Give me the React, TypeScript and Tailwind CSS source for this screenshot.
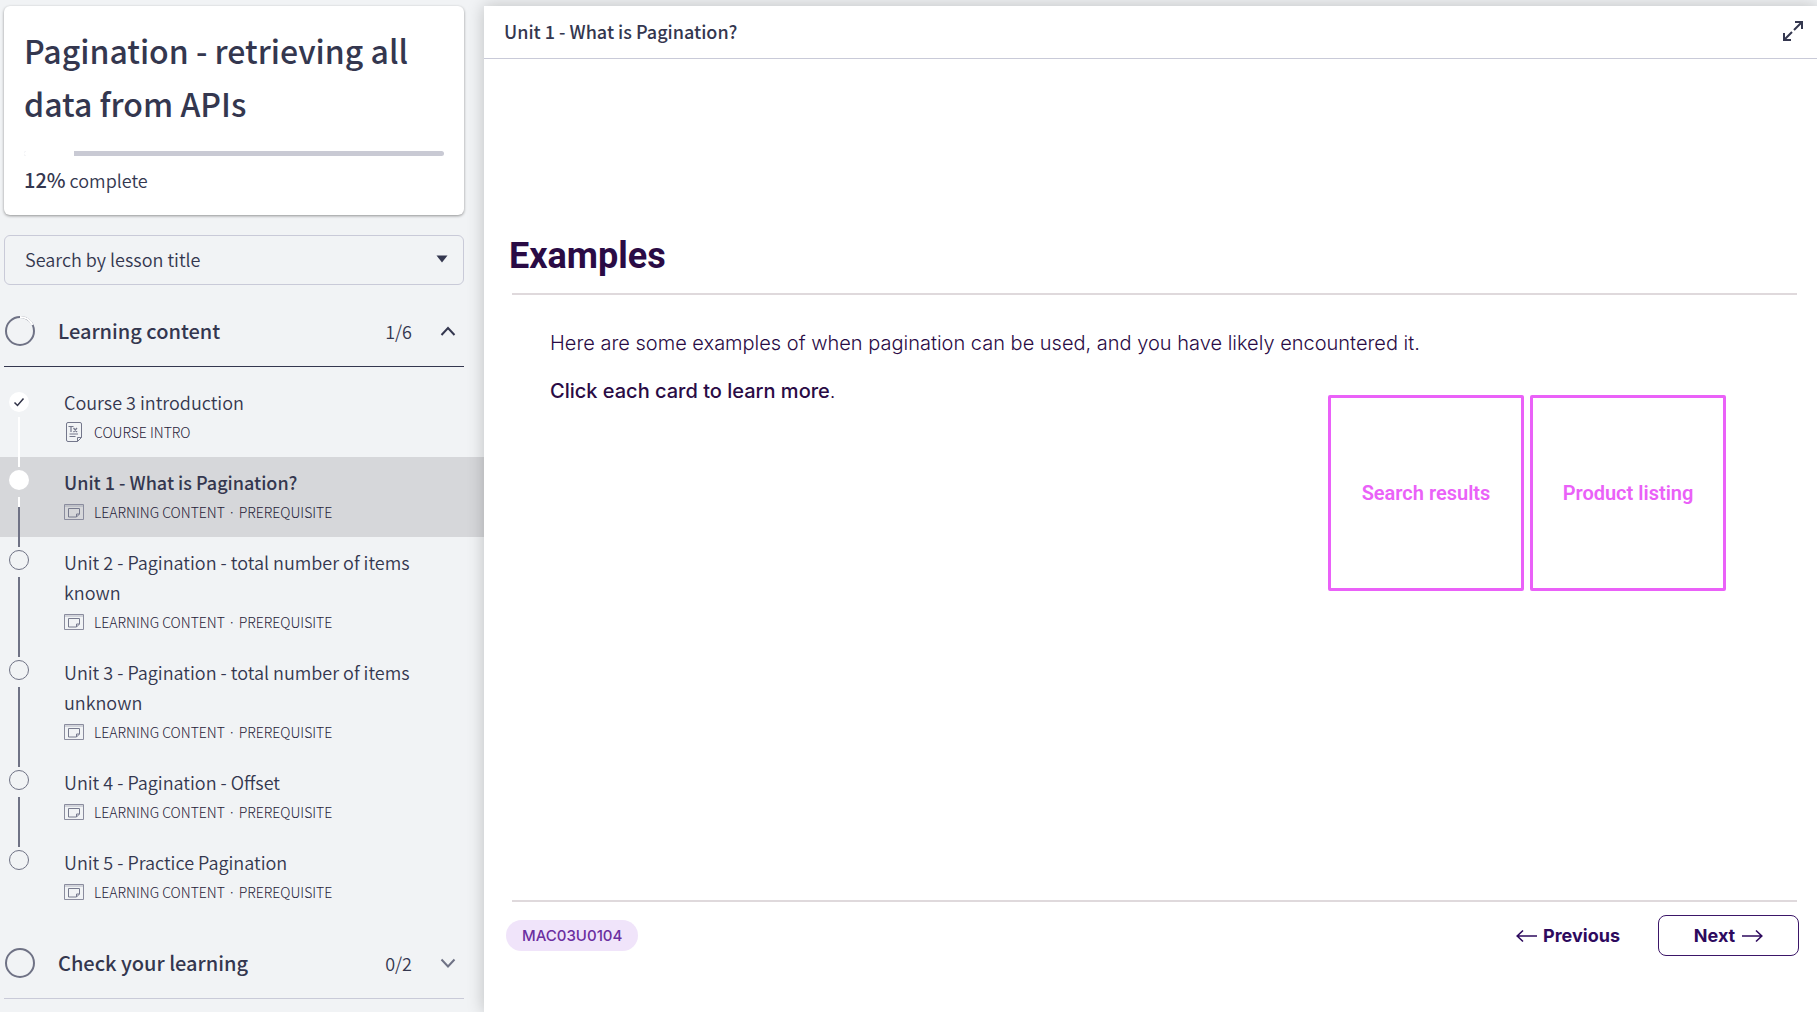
import { useState } from "react";

type Status = "done" | "current" | "todo";

interface Lesson {
  title: string;
  kind: string;
  prerequisite: boolean;
  status: Status;
}

const lessons: Lesson[] = [
  { title: "Course 3 introduction", kind: "COURSE INTRO", prerequisite: false, status: "done" },
  { title: "Unit 1 - What is Pagination?", kind: "LEARNING CONTENT", prerequisite: true, status: "current" },
  { title: "Unit 2 - Pagination - total number of items known", kind: "LEARNING CONTENT", prerequisite: true, status: "todo" },
  { title: "Unit 3 - Pagination - total number of items unknown", kind: "LEARNING CONTENT", prerequisite: true, status: "todo" },
  { title: "Unit 4 - Pagination - Offset", kind: "LEARNING CONTENT", prerequisite: true, status: "todo" },
  { title: "Unit 5 - Practice Pagination", kind: "LEARNING CONTENT", prerequisite: true, status: "todo" },
];

function TextPageIcon() {
  return (
    <svg className="h-5 w-5" viewBox="0 0 20 20" fill="none" stroke="#74778b" strokeWidth="1" aria-hidden="true">
      <path d="M4 .5h12a1.500 1.500 0 0 1 1.500 1.500v13.500l-4 4H4A1.500 1.500 0 0 1 2.500 18V2A1.500 1.500 0 0 1 4 .5z" />
      <path d="M13.500 19.500v-4h4M5.500 14.500h6M5.500 12h8.500" />
      <path d="M4.500 4.500h5M7 4.500v5.500M9.500 6l3.500 4M13 6l-3.500 4" strokeWidth="1.200" />
    </svg>
  );
}

function SlideIcon() {
  return (
    <svg className="h-5 w-5" viewBox="0 0 20 20" fill="none" stroke="#8a8c9e" strokeWidth="1" aria-hidden="true">
      <path d="M.5 2.500h19v15H.5z" />
      <path d="M.5 4h19" strokeOpacity=".6" />
      <path d="M4.500 6.500h11v5.500l-3 3h-8zM12.500 15v-3h3" stroke="#777a8e" />
    </svg>
  );
}

function Marker({ status }: { status: Status }) {
  if (status === "done") {
    return (
      <span className="flex size-5 items-center justify-center rounded-full bg-white">
        <svg className="size-3" viewBox="0 0 12 12" fill="none" stroke="#313348" strokeWidth="1.500" aria-hidden="true">
          <path d="M1.500 6.500l3 3 6-7" />
        </svg>
      </span>
    );
  }
  if (status === "current") return <span className="size-5 rounded-full bg-white" />;
  return <span className="size-5 rounded-full border border-[#6f7285]" />;
}

function LessonRow({ lesson, last }: { lesson: Lesson; last: boolean }) {
  const { status } = lesson;
  const current = status === "current";
  return (
    <li className={current ? "bg-[#d6d7da]" : ""}>
      <a href="#lesson" aria-current={current ? "page" : undefined} className="flex pl-[9px]">
        <span
          className={
            "flex w-5 shrink-0 flex-col items-center " + (status === "done" ? "gap-[5px] pt-[15px]" : "gap-[7px] pt-[13px]")
          }
        >
          <Marker status={status} />
          {!last && (
            <span
              className={
                "z-10 -mb-[10px] w-[2px] flex-1 " +
                (status === "done"
                  ? "bg-white"
                  : current
                    ? "bg-[linear-gradient(#ffffff_10px,#6f7285_10px)]"
                    : "bg-[#6f7285]")
              }
            />
          )}
        </span>
        <span className="ml-[35px] mr-[60px] flex flex-1 flex-col py-[10px]">
          <span className={"text-lg leading-[30px] text-[#34374f] " + (current ? "font-medium" : "font-[350]")}>
            {lesson.title}
          </span>
          <span className="flex h-[30px] items-center gap-[10px] text-sm font-light text-[#1f2138]">
            {status === "done" ? <TextPageIcon /> : <SlideIcon />}
            <span>{lesson.kind + (lesson.prerequisite ? " · PREREQUISITE" : "")}</span>
          </span>
        </span>
      </a>
    </li>
  );
}

interface SectionHeaderProps {
  title: string;
  count: string;
  open: boolean;
  onToggle: () => void;
}

function SectionHeader({ title, count, open, onToggle }: SectionHeaderProps) {
  return (
    <button
      type="button"
      aria-expanded={open}
      onClick={onToggle}
      className={
        "mx-1 flex h-[71px] items-center border-b text-left " + (open ? "border-[#34374f]" : "border-[#c9cad8]")
      }
    >
      <svg className="h-8 w-8 shrink-0" viewBox="0 0 32 32" fill="none" strokeWidth="2" aria-hidden="true">
        <circle cx="16" cy="16" r="14" stroke="#6f7285" />
        {open && <path d="M16 2a14 14 0 0 1 12.600 8" stroke="#ffffff" />}
      </svg>
      <span className="ml-[22px] flex-1 text-xl font-medium text-[#34374f]">{title}</span>
      <span className="text-lg font-[350] text-[#34374f]">{count}</span>
      <svg
        className="ml-7 mr-2 size-4"
        viewBox="0 0 16 16"
        fill="none"
        stroke={open ? "#34374f" : "#6f7285"}
        strokeWidth="2"
        aria-hidden="true"
      >
        <path d={open ? "M1.500 12L8 5l6.500 7" : "M1.500 4.500L8 11.500l6.500-7"} />
      </svg>
    </button>
  );
}

function Sidebar() {
  const [open, setOpen] = useState(true);
  const [checkOpen, setCheckOpen] = useState(false);
  return (
    <aside className="flex w-[484px] shrink-0 flex-col pt-[6px]">
      <section className="ml-1 mr-5 rounded-md bg-white px-5 pb-5 pt-[18px] shadow-[0_1px_3px_rgba(0,0,0,0.4)]">
        <h1 className="text-[32px] font-medium leading-[53px] text-[#34374f]">Pagination - retrieving all data from APIs</h1>
        <div
          role="progressbar"
          aria-label="Course progress"
          aria-valuenow={12}
          className="mt-[21px] flex h-[5px] overflow-hidden rounded-full bg-[#c9cad4]"
        >
          <div className="w-[12%] bg-white" />
        </div>
        <p className="mt-[9px] flex h-[30px] items-baseline gap-1 text-lg leading-[30px] text-[#34374f]">
          <span className="text-xl font-medium leading-[30px]">12%</span>
          <span className="font-[350]">complete</span>
        </p>
      </section>

      <div className="relative ml-1 mr-5 mt-5">
        <select
          aria-label="Search by lesson title"
          className="h-[50px] w-full appearance-none rounded-md border border-[#c9cad8] bg-transparent px-5 pb-[3px] text-lg font-[350] text-[#34374f]"
        >
          <option>Search by lesson title</option>
        </select>
        <svg className="pointer-events-none absolute right-4 top-5 h-2 w-3" viewBox="0 0 12 8" fill="#34374f" aria-hidden="true">
          <path d="M.5.500h11L6 7.500z" />
        </svg>
      </div>

      <nav className="mt-[11px] flex flex-col" aria-label="Lessons">
        <div className="mr-4 flex flex-col">
          <SectionHeader title="Learning content" count="1/6" open={open} onToggle={() => setOpen(!open)} />
        </div>
        {open && (
          <ul className="pb-[11px] pt-[10px]">
            {lessons.map((l, i) => (
              <LessonRow key={l.title} lesson={l} last={i === lessons.length - 1} />
            ))}
          </ul>
        )}
        <div className="mr-4 flex flex-col">
          <SectionHeader title="Check your learning" count="0/2" open={checkOpen} onToggle={() => setCheckOpen(!checkOpen)} />
        </div>
      </nav>
    </aside>
  );
}

function Arrow({ left = false }: { left?: boolean }) {
  return (
    <svg className="h-4 w-[21px]" viewBox="0 0 21 16" fill="none" stroke="#2e0a5e" strokeWidth="1.600" aria-hidden="true">
      <path d={left ? "M21 8H1M7 2.500L1.200 8 7 13.500" : "M0 8h20M14 2.500L19.800 8 14 13.500"} />
    </svg>
  );
}

export default function App() {
  return (
    <div className="flex min-h-screen overflow-hidden bg-[#f1f3f5] font-['Noto_Sans_CJK_JP',sans-serif]">
      <Sidebar />
      <main className="z-20 mt-[6px] flex flex-1 flex-col bg-white shadow-[0_0_16px_rgba(0,0,0,0.22)]">
        <header className="flex h-[53px] items-center justify-between border-b border-[#c9cad8] pb-[2px] pl-5 pr-[13px]">
          <h2 className="text-lg font-medium text-[#34374f]">Unit 1 - What is Pagination?</h2>
          <button type="button" aria-label="Full screen">
            <svg className="size-[22px]" viewBox="0 0 22 22" fill="none" stroke="#34374f" strokeWidth="2" aria-hidden="true">
              <path d="M13 2h7v7M20 2l-8 8M2 13v7h7M2 20l8-8" />
            </svg>
          </button>
        </header>

        <article className="flex flex-1 flex-col pb-[56px] pl-7 pr-5 pt-[172px] font-['Inter',sans-serif] text-[#2a0b45]">
          <h3 className="-ml-[3px] font-['Roboto',sans-serif] text-4xl font-bold leading-[50px]">Examples</h3>
          <hr className="mt-3 border-t-2 border-[#dfd9dc]" />
          <div className="pl-[38px] pt-8 text-xl leading-8">
            <p className="font-light">
              Here are some examples of when pagination can be used, and you have likely encountered it.
            </p>
            <p className="mt-4">
              <span className="font-medium">Click each card to learn more</span>
              <span className="font-light">.</span>
            </p>
          </div>
          <div className="-mt-3 mr-[71px] flex justify-end gap-[6px]">
            {["Search results", "Product listing"].map((label) => (
              <button
                key={label}
                type="button"
                className="size-[196px] rounded-xs border-[3px] border-[#ea61f8] font-['Roboto',sans-serif] text-xl font-semibold text-[#ea61f8]"
              >
                {label}
              </button>
            ))}
          </div>
          <div className="flex-1" />
          <footer>
            <hr className="border-t-2 border-[#dfd9dc]" />
            <div className="-ml-[6px] -mr-[2px] mt-[13px] flex items-center">
              <span className="rounded-full bg-[#f0e4fa] px-4 py-1 text-[15px] font-medium leading-[23px] text-[#6b2fa0]">
                MAC03U0104
              </span>
              <button type="button" className="ml-auto flex h-10 items-center gap-[6px] text-lg font-bold text-[#2e0a5e]">
                <Arrow left />
                Previous
              </button>
              <button
                type="button"
                className="ml-[38px] flex h-[41px] w-[141px] items-center justify-center gap-[7px] rounded-lg border border-[#3b1668] text-lg font-bold text-[#2e0a5e]"
              >
                Next
                <Arrow />
              </button>
            </div>
          </footer>
        </article>
      </main>
    </div>
  );
}
